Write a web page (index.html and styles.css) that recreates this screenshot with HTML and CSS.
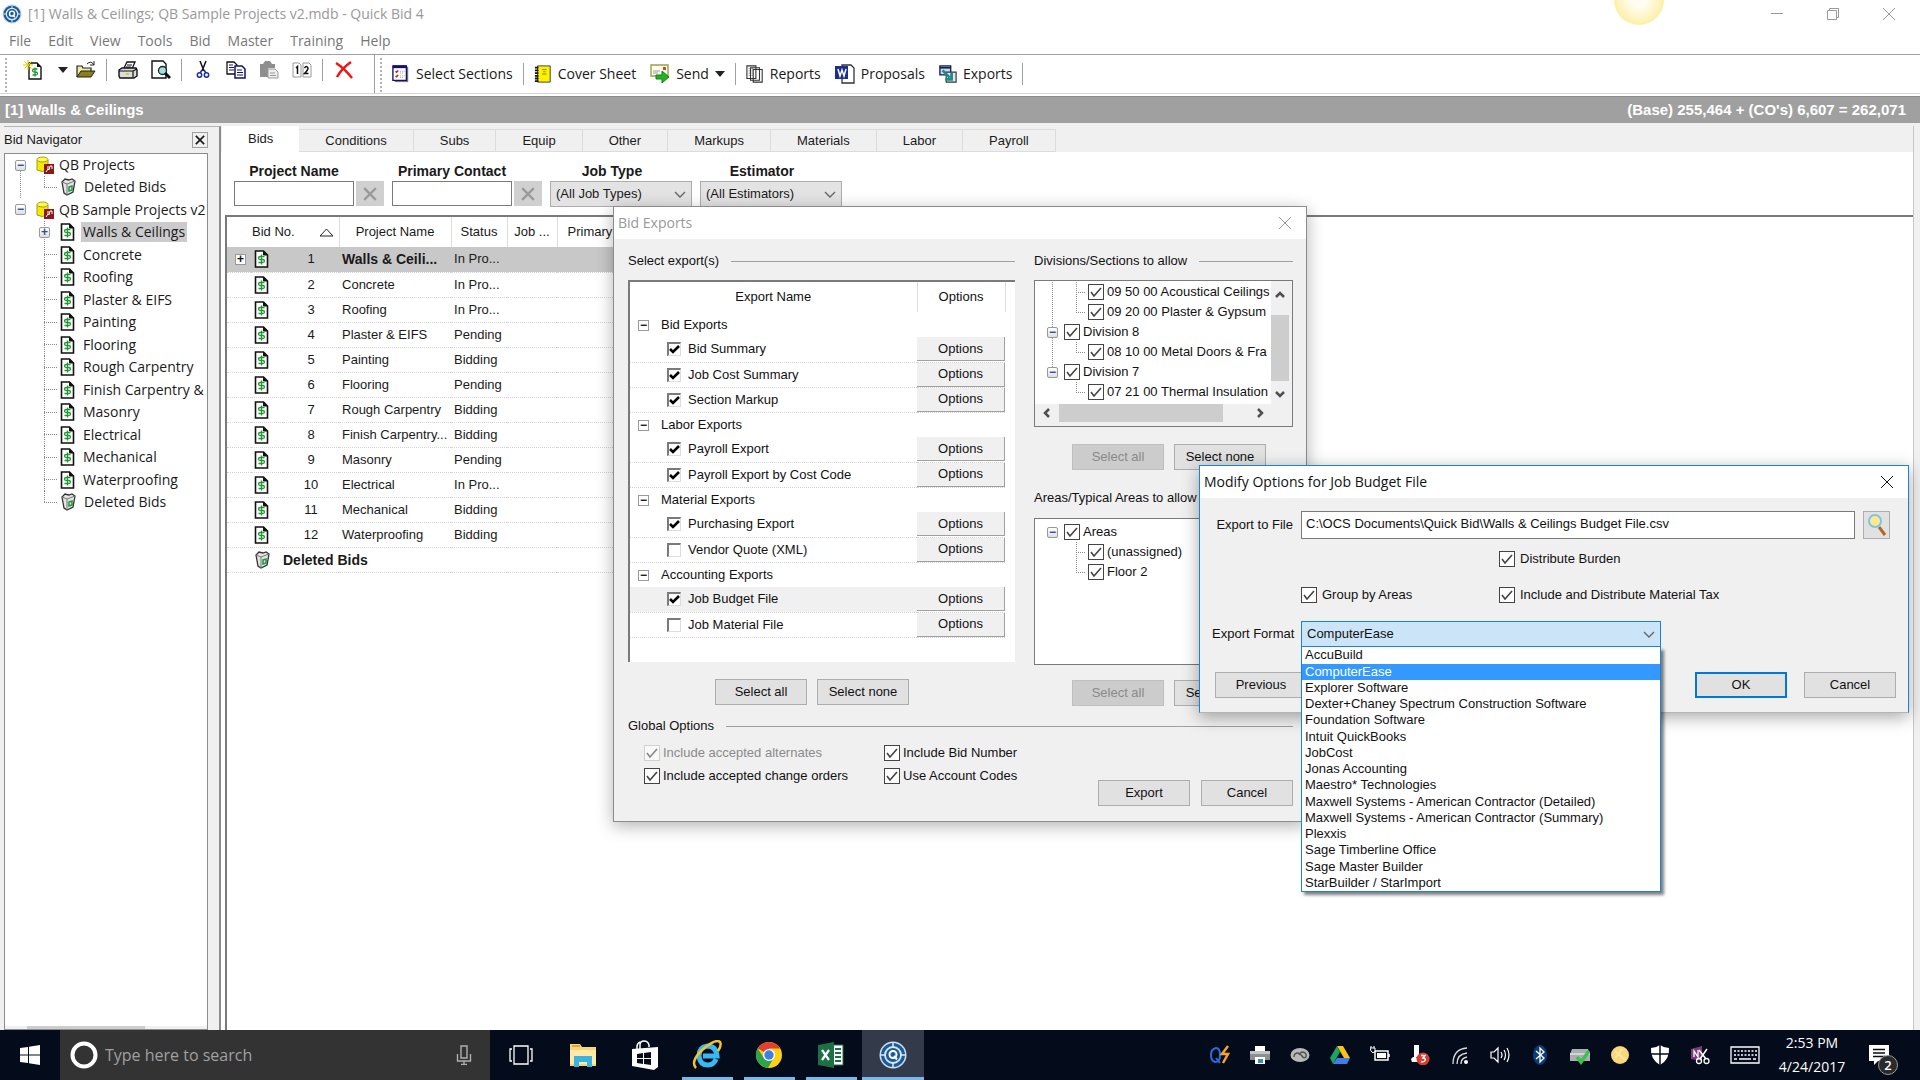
FILE: index.html
```html
<!DOCTYPE html>
<html lang="en">
<head>
    <meta charset="UTF-8">
    <meta name="viewport" content="width=device-width, initial-scale=1.0">
    <title>[1] Walls &amp; Ceilings; QB Sample Projects v2.mdb - Quick Bid 4</title>
    <link rel="stylesheet" href="styles.css">
</head>
<body>
    <svg class="sprite" aria-hidden="true">
        <symbol id="i-quickbid" viewBox="0 0 28 28">
            <circle cx="14" cy="14" r="13.500" fill="#cfe0f0"/>
            <circle cx="14" cy="14" r="12" fill="#1d5a9a"/>
            <circle cx="14" cy="14" r="8" fill="none" stroke="#dbe9f5" stroke-width="1.800"/>
            <path d="M14 2v5M14 21v5M2 14h5M21 14h5" stroke="#dbe9f5" stroke-width="1.500"/>
            <circle cx="14" cy="13.500" r="3.500" fill="none" stroke="#fff" stroke-width="2"/>
            <path d="M15 15l3 3.500" stroke="#fff" stroke-width="2"/>
        </symbol>
        <symbol id="i-bid" viewBox="0 0 14 18">
            <path d="M1 1h8l4 4v12H1z" fill="#fff" stroke="#111" stroke-width="1.600"/>
            <path d="M9 1v4h4" fill="#111" stroke="#111"/>
            <path d="M10 6.500H6q-2 0-2 1.500T6 9.500h2q2 0 2 1.500t-2 1.500H4M7 4.500v10" fill="none" stroke="#1d9a2f" stroke-width="1.300"/>
        </symbol>
        <symbol id="i-trash" viewBox="0 0 16 18">
            <path d="M2 4l3-3 4 1 3-1 3 2-2 11-6 3-3-2z" fill="#e4e4e4" stroke="#333" stroke-width="1.300"/>
            <path d="M2 4l5 2 8-3M7 6v11" fill="none" stroke="#777"/>
            <path d="M9 9l3-1v4l-3 1z" fill="none" stroke="#1a9a3a" stroke-width="1.500"/>
        </symbol>
        <symbol id="i-db" viewBox="0 0 18 18">
            <path d="M1 4v10q5 3 11 0V4z" fill="#f2ea00" stroke="#a79a20"/>
            <ellipse cx="6.500" cy="3.500" rx="5.500" ry="2.500" fill="#fff94d" stroke="#a79a20"/>
            <path d="M8 8h10v10H8z" fill="#8c1818"/>
            <path d="M10 16l2-3 1 1 1-4h2v3M12 10v3" fill="none" stroke="#fff"/>
        </symbol>
        <symbol id="i-new" viewBox="0 0 20 20">
            <path d="M6 3h8l4 4v12H6z" fill="#fff" stroke="#111" stroke-width="1.400"/>
            <path d="M14 3v4h4" fill="#111"/>
            <path d="M14.500 9h-3q-2 0-2 1.500t2 1.500h1q2 0 2 1.500t-2 1.500h-3M12 7.500v9" fill="none" stroke="#1d9a2f" stroke-width="1.300"/>
            <path d="M5 0v10M0 5h10M1.500 1.500l7 7M8.500 1.500l-7 7" stroke="#d8c800"/>
        </symbol>
        <symbol id="i-open" viewBox="0 0 20 20">
            <path d="M1 17V6h5l1 2h8v3" fill="#f4e9a0" stroke="#222" stroke-width="1.200"/>
            <path d="M1 17l4-6h14l-4 6z" fill="#8a7f1a" stroke="#222"/>
            <path d="M11 4q4-4 7 1M18 1v4h-4" fill="none" stroke="#222"/>
        </symbol>
        <symbol id="i-print" viewBox="0 0 20 20">
            <path d="M6 8l3-6h8l-3 7" fill="#fff" stroke="#111" stroke-width="1.300"/>
            <path d="M1 10l3-2h14l1 2v6l-3 2H2l-1-2z" fill="#ddd" stroke="#111" stroke-width="1.400"/>
            <path d="M1 11h14v6M15 11l4-2M9 5h5M8 7h5" fill="none" stroke="#111" stroke-width="1.200"/>
            <path d="M8 14h3" stroke="#d8c800" stroke-width="1.500"/>
        </symbol>
        <symbol id="i-preview" viewBox="0 0 20 20">
            <path d="M1 1h11l3 3v14H1z" fill="#fff" stroke="#111" stroke-width="1.400"/>
            <circle cx="11.500" cy="10.500" r="4" fill="#9fdfe6" stroke="#222" stroke-width="1.300"/>
            <path d="M14 13l5 5" stroke="#111" stroke-width="3"/>
        </symbol>
        <symbol id="i-cut" viewBox="0 0 20 20">
            <path d="M7 1l4 10M13 1L9 11" stroke="#111" stroke-width="1.500"/>
            <path d="M9 10l-2 3M11 10l2 3" stroke="#1c2f9e" stroke-width="1.500"/>
            <circle cx="6.500" cy="15" r="2.200" fill="none" stroke="#1c2f9e" stroke-width="1.500"/>
            <circle cx="13.500" cy="15" r="2.200" fill="none" stroke="#1c2f9e" stroke-width="1.500"/>
        </symbol>
        <symbol id="i-copy" viewBox="0 0 20 20">
            <path d="M1 2h7l3 3v9H1z" fill="#fff" stroke="#111" stroke-width="1.300"/>
            <path d="M9 6h7l3 3v9H9z" fill="#fff" stroke="#10107a" stroke-width="1.500"/>
            <path d="M3 5h4M3 7.500h5M3 10h5M11 10h5M11 12.500h6M11 15h6" stroke="#10107a"/>
        </symbol>
        <symbol id="i-paste" viewBox="0 0 20 20">
            <path d="M1 4h3l2-3h5l2 3h3v4H9v9H1z" fill="#8e8e8e"/>
            <path d="M9 9h7l3 3v6H9z" fill="#ededed" stroke="#9a9a9a"/>
            <path d="M11 13h5M11 15.500h6" stroke="#9a9a9a"/>
        </symbol>
        <symbol id="i-renumber" viewBox="0 0 20 20">
            <path d="M1 3h6l2 2v12H1zM11 3h6l2 2v12h-8z" fill="#fff" stroke="#999"/>
            <path d="M4 8l1.500-1.500V14M12.500 8q2-3 3.500 0 0 2-3.500 5.500h4" fill="none" stroke="#111" stroke-width="1.500"/>
        </symbol>
        <symbol id="i-delete" viewBox="0 0 20 20">
            <path d="M2 3q8 5 16 15M17 2Q8 8 3 17" fill="none" stroke="#f01414" stroke-width="2.500"/>
        </symbol>
        <symbol id="i-sections" viewBox="0 0 20 20">
            <path d="M3 2h15v17H3z" fill="#777"/>
            <path d="M1 1h15v16H1z" fill="#fff" stroke="#10107a" stroke-width="1.500"/>
            <path d="M1 2h15" stroke="#10107a" stroke-width="3"/>
            <path d="M4 7l1 1 2-2M4 12l1 1 2-2" fill="none" stroke="#e01010" stroke-width="1.500"/>
            <path d="M9 7h5M9 9h3M9 12h5M9 14h3" stroke="#999" stroke-dasharray="1 1"/>
        </symbol>
        <symbol id="i-cover" viewBox="0 0 20 20">
            <path d="M4 1h14v18H4z" fill="#fff200" stroke="#333"/>
            <path d="M9 5h5M10 7.500h3M9 10h5" stroke="#8a7a00"/>
            <path d="M3 2v17" stroke="#111" stroke-width="4" stroke-dasharray="2 1"/>
        </symbol>
        <symbol id="i-send" viewBox="0 0 20 20">
            <path d="M1 1h17v11H1z" fill="#fffef0" stroke="#9aa04a" stroke-width="1.400"/>
            <path d="M13 3h3v3h-3z" fill="#e84030"/>
            <path d="M3 7h7M3 9h5" stroke="#999"/>
            <path d="M6 11h6V7l7 6-7 6v-4H6z" fill="#22b522" stroke="#128012"/>
        </symbol>
        <symbol id="i-reports" viewBox="0 0 20 20">
            <path d="M8 5h10v14H8zM5 3h10v14H5zM1 1h10v14H1z" fill="#fff" stroke="#333" stroke-width="1.200"/>
            <path d="M3 4h6M3 6.500h6M3 9h6M3 11.500h6" stroke="#555" stroke-dasharray="1 1"/>
        </symbol>
        <symbol id="i-word" viewBox="0 0 20 20">
            <path d="M7 1h9l3 3v15H7z" fill="#fff" stroke="#333" stroke-width="1.300"/>
            <path d="M0 2h13v13H0z" fill="#1c2f8e"/>
            <path d="M3 5l2 7 2-6 2 6 2-7" fill="none" stroke="#fff" stroke-width="1.500"/>
        </symbol>
        <symbol id="i-exports" viewBox="0 0 20 20">
            <path d="M1 1h12v10H1z" fill="#cfd6e4" stroke="#10205a" stroke-width="1.500"/>
            <path d="M1 3h12" stroke="#10205a" stroke-width="2"/>
            <path d="M8 8h11v11H8z" fill="#dfe6ee" stroke="#333" stroke-width="1.300"/>
            <path d="M4 6l8 8M7 16h7V9" fill="none" stroke="#1c8c8c" stroke-width="3"/>
        </symbol>
        <symbol id="i-caret" viewBox="0 0 10 6"><path d="M0 0h10L5 6z" fill="#222"/></symbol>
        <symbol id="i-x" viewBox="0 0 12 12"><path d="M0 0l12 12M12 0L0 12" stroke="currentColor" fill="none"/></symbol>
        <symbol id="i-xbold" viewBox="0 0 12 12"><path d="M1 1l10 10M11 1L1 11" stroke="currentColor" stroke-width="2" fill="none"/></symbol>
        <symbol id="i-up" viewBox="0 0 10 8"><path d="M1 6l4-4 4 4" stroke="#505050" stroke-width="2.500" fill="none"/></symbol>
        <symbol id="i-down" viewBox="0 0 10 8"><path d="M1 2l4 4 4-4" stroke="#505050" stroke-width="2.500" fill="none"/></symbol>
        <symbol id="i-left" viewBox="0 0 8 10"><path d="M6 1L2 5l4 4" stroke="#505050" stroke-width="2.500" fill="none"/></symbol>
        <symbol id="i-right" viewBox="0 0 8 10"><path d="M2 1l4 4-4 4" stroke="#505050" stroke-width="2.500" fill="none"/></symbol>
        <symbol id="i-find" viewBox="0 0 20 24">
            <path d="M12 14l6 8" stroke="#b06a20" stroke-width="3"/>
            <circle cx="8" cy="8" r="6" fill="#ffe98a" stroke="#7fc4e8" stroke-width="2"/>
        </symbol>
    </svg>

    <main class="desktop">
        <header class="titlebar">
            <svg width="20" height="20"><use href="#i-quickbid"/></svg>
            <h1>[1] Walls &amp; Ceilings; QB Sample Projects v2.mdb - Quick Bid 4</h1>
            <div class="caption-buttons">
                <button aria-label="Minimize"><svg width="12" height="12"><path d="M0 5.500h12" stroke="currentColor"/></svg></button>
                <button aria-label="Restore"><svg width="12" height="12"><path d="M.5 2.500h9v9h-9zM2.500 2.500v-2h9v9h-2" stroke="currentColor" fill="none"/></svg></button>
                <button aria-label="Close"><svg width="12" height="12"><use href="#i-x"/></svg></button>
            </div>
        </header>
        <div class="pointer-spot"></div>

        <nav class="menubar">
            <a href="#">File</a><a href="#">Edit</a><a href="#">View</a><a href="#">Tools</a><a href="#">Bid</a><a href="#">Master</a><a href="#">Training</a><a href="#">Help</a>
        </nav>

        <div class="toolbars">
            <div class="toolbar tools">
                <span class="grip"></span>
                <button aria-label="New bid"><svg width="20" height="20"><use href="#i-new"/></svg></button>
                <button class="drop" aria-label="New bid options"><svg width="10" height="6"><use href="#i-caret"/></svg></button>
                <button aria-label="Open"><svg width="20" height="20"><use href="#i-open"/></svg></button>
                <span class="sep"></span>
                <button aria-label="Print"><svg width="20" height="20"><use href="#i-print"/></svg></button>
                <button aria-label="Print preview"><svg width="20" height="20"><use href="#i-preview"/></svg></button>
                <span class="sep"></span>
                <button aria-label="Cut"><svg width="20" height="20"><use href="#i-cut"/></svg></button>
                <button aria-label="Copy"><svg width="20" height="20"><use href="#i-copy"/></svg></button>
                <button aria-label="Paste" disabled><svg width="20" height="20"><use href="#i-paste"/></svg></button>
                <button aria-label="Renumber"><svg width="20" height="20"><use href="#i-renumber"/></svg></button>
                <span class="sep"></span>
                <button aria-label="Delete"><svg width="20" height="20"><use href="#i-delete"/></svg></button>
            </div>
            <div class="toolbar actions">
                <span class="grip"></span>
                <button><svg width="18" height="18"><use href="#i-sections"/></svg>Select Sections</button>
                <span class="sep"></span>
                <button><svg width="18" height="18"><use href="#i-cover"/></svg>Cover Sheet</button>
                <button><svg width="20" height="20"><use href="#i-send"/></svg>Send <svg width="10" height="6"><use href="#i-caret"/></svg></button>
                <span class="sep"></span>
                <button><svg width="18" height="18"><use href="#i-reports"/></svg>Reports</button>
                <button><svg width="20" height="20"><use href="#i-word"/></svg>Proposals</button>
                <button><svg width="18" height="18"><use href="#i-exports"/></svg>Exports</button>
                <span class="sep"></span>
            </div>
        </div>

        <div class="bidbar">
            <span>[1] Walls &amp; Ceilings</span>
            <span>(Base) 255,464 + (CO's) 6,607 = 262,071</span>
        </div>

        <div class="workspace">
            <aside class="navigator">
                <div class="navigator-head">
                    <h2>Bid Navigator</h2>
                    <button aria-label="Close navigator"><svg width="10" height="10"><use href="#i-xbold"/></svg></button>
                </div>
                <div class="navigator-box">
                    <ul class="tree nav-tree">
                        <li>
                            <div class="node"><span class="expander">−</span><svg width="18" height="18"><use href="#i-db"/></svg><span>QB Projects</span></div>
                            <ul>
                                <li><div class="node"><svg width="16" height="18"><use href="#i-trash"/></svg><span>Deleted Bids</span></div></li>
                            </ul>
                        </li>
                        <li>
                            <div class="node"><span class="expander">−</span><svg width="18" height="18"><use href="#i-db"/></svg><span>QB Sample Projects v2</span></div>
                            <ul>
                                <li class="selected"><div class="node"><span class="expander">+</span><svg width="15" height="18"><use href="#i-bid"/></svg><span>Walls &amp; Ceilings</span></div></li>
                                <li><div class="node"><svg width="15" height="18"><use href="#i-bid"/></svg><span>Concrete</span></div></li>
                                <li><div class="node"><svg width="15" height="18"><use href="#i-bid"/></svg><span>Roofing</span></div></li>
                                <li><div class="node"><svg width="15" height="18"><use href="#i-bid"/></svg><span>Plaster &amp; EIFS</span></div></li>
                                <li><div class="node"><svg width="15" height="18"><use href="#i-bid"/></svg><span>Painting</span></div></li>
                                <li><div class="node"><svg width="15" height="18"><use href="#i-bid"/></svg><span>Flooring</span></div></li>
                                <li><div class="node"><svg width="15" height="18"><use href="#i-bid"/></svg><span>Rough Carpentry</span></div></li>
                                <li><div class="node"><svg width="15" height="18"><use href="#i-bid"/></svg><span>Finish Carpentry &amp;</span></div></li>
                                <li><div class="node"><svg width="15" height="18"><use href="#i-bid"/></svg><span>Masonry</span></div></li>
                                <li><div class="node"><svg width="15" height="18"><use href="#i-bid"/></svg><span>Electrical</span></div></li>
                                <li><div class="node"><svg width="15" height="18"><use href="#i-bid"/></svg><span>Mechanical</span></div></li>
                                <li><div class="node"><svg width="15" height="18"><use href="#i-bid"/></svg><span>Waterproofing</span></div></li>
                                <li><div class="node"><svg width="16" height="18"><use href="#i-trash"/></svg><span>Deleted Bids</span></div></li>
                            </ul>
                        </li>
                    </ul>
                    <div class="nav-scroll"><div class="thumb"></div></div>
                </div>
            </aside>

            <section class="content">
                <div class="tabs" role="tablist">
                    <button role="tab" class="active" aria-selected="true">Bids</button>
                    <button role="tab">Conditions</button>
                    <button role="tab">Subs</button>
                    <button role="tab">Equip</button>
                    <button role="tab">Other</button>
                    <button role="tab">Markups</button>
                    <button role="tab">Materials</button>
                    <button role="tab">Labor</button>
                    <button role="tab">Payroll</button>
                </div>

                <div class="filters">
                    <div class="filter">
                        <label for="fProject">Project Name</label>
                        <input type="text" id="fProject">
                        <button aria-label="Clear project name" disabled><svg width="14" height="14"><use href="#i-xbold"/></svg></button>
                    </div>
                    <div class="filter">
                        <label for="fContact">Primary Contact</label>
                        <input type="text" id="fContact">
                        <button aria-label="Clear primary contact" disabled><svg width="14" height="14"><use href="#i-xbold"/></svg></button>
                    </div>
                    <div class="filter pick">
                        <label for="fType">Job Type</label>
                        <select id="fType"><option>(All Job Types)</option></select>
                    </div>
                    <div class="filter pick">
                        <label for="fEstimator">Estimator</label>
                        <select id="fEstimator"><option>(All Estimators)</option></select>
                    </div>
                </div>

                <div class="grid">
                    <table class="bids">
                        <colgroup><col class="c-exp"><col class="c-icon"><col class="c-no"><col class="c-name"><col class="c-status"><col class="c-job"><col></colgroup>
                        <thead>
                            <tr>
                                <th colspan="3"><span class="sorted">Bid No. <svg width="15" height="9"><path d="M1 8h13L7.500 1z" fill="none" stroke="#222"/></svg></span></th>
                                <th>Project Name</th><th>Status</th><th>Job ...</th><th class="last">Primary</th>
                            </tr>
                        </thead>
                        <tbody>
                            <tr class="current"><td><span class="expander plain">+</span></td><td><svg width="15" height="18"><use href="#i-bid"/></svg></td><td class="no">1</td><td>Walls &amp; Ceili...</td><td>In Pro...</td><td></td><td></td></tr>
                            <tr><td></td><td><svg width="15" height="18"><use href="#i-bid"/></svg></td><td class="no">2</td><td>Concrete</td><td>In Pro...</td><td></td><td></td></tr>
                            <tr><td></td><td><svg width="15" height="18"><use href="#i-bid"/></svg></td><td class="no">3</td><td>Roofing</td><td>In Pro...</td><td></td><td></td></tr>
                            <tr><td></td><td><svg width="15" height="18"><use href="#i-bid"/></svg></td><td class="no">4</td><td>Plaster &amp; EIFS</td><td>Pending</td><td></td><td></td></tr>
                            <tr><td></td><td><svg width="15" height="18"><use href="#i-bid"/></svg></td><td class="no">5</td><td>Painting</td><td>Bidding</td><td></td><td></td></tr>
                            <tr><td></td><td><svg width="15" height="18"><use href="#i-bid"/></svg></td><td class="no">6</td><td>Flooring</td><td>Pending</td><td></td><td></td></tr>
                            <tr><td></td><td><svg width="15" height="18"><use href="#i-bid"/></svg></td><td class="no">7</td><td>Rough Carpentry</td><td>Bidding</td><td></td><td></td></tr>
                            <tr><td></td><td><svg width="15" height="18"><use href="#i-bid"/></svg></td><td class="no">8</td><td>Finish Carpentry...</td><td>Bidding</td><td></td><td></td></tr>
                            <tr><td></td><td><svg width="15" height="18"><use href="#i-bid"/></svg></td><td class="no">9</td><td>Masonry</td><td>Pending</td><td></td><td></td></tr>
                            <tr><td></td><td><svg width="15" height="18"><use href="#i-bid"/></svg></td><td class="no">10</td><td>Electrical</td><td>In Pro...</td><td></td><td></td></tr>
                            <tr><td></td><td><svg width="15" height="18"><use href="#i-bid"/></svg></td><td class="no">11</td><td>Mechanical</td><td>Bidding</td><td></td><td></td></tr>
                            <tr><td></td><td><svg width="15" height="18"><use href="#i-bid"/></svg></td><td class="no">12</td><td>Waterproofing</td><td>Bidding</td><td></td><td></td></tr>
                            <tr class="deleted"><td></td><td><svg width="16" height="18"><use href="#i-trash"/></svg></td><td colspan="5">Deleted Bids</td></tr>
                        </tbody>
                    </table>
                </div>
            </section>
        </div>

        <section class="dialog exports" role="dialog" aria-labelledby="exportsTitle">
            <header class="dialog-title">
                <h2 id="exportsTitle">Bid Exports</h2>
                <button aria-label="Close"><svg width="12" height="12"><use href="#i-x"/></svg></button>
            </header>
            <div class="exports-body">
                <div class="exports-columns">
                    <div class="col-exports">
                        <h3>Select export(s)</h3>
                        <div class="list">
                            <table>
                                <colgroup><col><col class="c-options"><col class="c-end"></colgroup>
                                <thead><tr><th>Export Name</th><th>Options</th><th></th></tr></thead>
                                <tbody>
                                    <tr class="group"><td colspan="3"><span class="expander plain">−</span>Bid Exports</td></tr>
                                    <tr><td><label class="check sunken"><input type="checkbox" checked>Bid Summary</label></td><td><button>Options</button></td><td></td></tr>
                                    <tr><td><label class="check sunken"><input type="checkbox" checked>Job Cost Summary</label></td><td><button>Options</button></td><td></td></tr>
                                    <tr><td><label class="check sunken"><input type="checkbox" checked>Section Markup</label></td><td><button>Options</button></td><td></td></tr>
                                    <tr class="group"><td colspan="3"><span class="expander plain">−</span>Labor Exports</td></tr>
                                    <tr><td><label class="check sunken"><input type="checkbox" checked>Payroll Export</label></td><td><button>Options</button></td><td></td></tr>
                                    <tr><td><label class="check sunken"><input type="checkbox" checked>Payroll Export by Cost Code</label></td><td><button>Options</button></td><td></td></tr>
                                    <tr class="group"><td colspan="3"><span class="expander plain">−</span>Material Exports</td></tr>
                                    <tr><td><label class="check sunken"><input type="checkbox" checked>Purchasing Export</label></td><td><button>Options</button></td><td></td></tr>
                                    <tr><td><label class="check sunken"><input type="checkbox">Vendor Quote (XML)</label></td><td><button>Options</button></td><td></td></tr>
                                    <tr class="group"><td colspan="3"><span class="expander plain">−</span>Accounting Exports</td></tr>
                                    <tr class="hot"><td><label class="check sunken"><input type="checkbox" checked>Job Budget File</label></td><td><button>Options</button></td><td></td></tr>
                                    <tr><td><label class="check sunken"><input type="checkbox">Job Material File</label></td><td><button>Options</button></td><td></td></tr>
                                </tbody>
                            </table>
                        </div>
                        <div class="button-row">
                            <button class="btn">Select all</button>
                            <button class="btn">Select none</button>
                        </div>
                    </div>

                    <div class="col-scope">
                        <h3>Divisions/Sections to allow</h3>
                        <div class="scope-box">
                            <div class="scope-view">
                                <ul class="tree check-tree">
                                    <li>
                                        <ul>
                                            <li><div class="node"><label class="check"><input type="checkbox" checked>09 50 00 Acoustical Ceilings</label></div></li>
                                            <li><div class="node"><label class="check"><input type="checkbox" checked>09 20 00 Plaster &amp; Gypsum</label></div></li>
                                        </ul>
                                    </li>
                                    <li>
                                        <div class="node"><span class="expander">−</span><label class="check"><input type="checkbox" checked>Division 8</label></div>
                                        <ul>
                                            <li><div class="node"><label class="check"><input type="checkbox" checked>08 10 00 Metal Doors &amp; Fra</label></div></li>
                                        </ul>
                                    </li>
                                    <li>
                                        <div class="node"><span class="expander">−</span><label class="check"><input type="checkbox" checked>Division 7</label></div>
                                        <ul>
                                            <li><div class="node"><label class="check"><input type="checkbox" checked>07 21 00 Thermal Insulation</label></div></li>
                                        </ul>
                                    </li>
                                </ul>
                                <div class="vscroll">
                                    <svg width="10" height="8"><use href="#i-up"/></svg>
                                    <div class="track"><div class="thumb"></div></div>
                                    <svg width="10" height="8"><use href="#i-down"/></svg>
                                </div>
                            </div>
                            <div class="hscroll">
                                <svg width="8" height="10"><use href="#i-left"/></svg>
                                <div class="track"><div class="thumb"></div></div>
                                <svg width="8" height="10"><use href="#i-right"/></svg>
                            </div>
                        </div>
                        <div class="button-row">
                            <button class="btn" disabled>Select all</button>
                            <button class="btn">Select none</button>
                        </div>
                        <h3 class="next">Areas/Typical Areas to allow</h3>
                        <div class="scope-box areas">
                            <ul class="tree check-tree">
                                <li>
                                    <div class="node"><span class="expander">−</span><label class="check"><input type="checkbox" checked>Areas</label></div>
                                    <ul>
                                        <li><div class="node"><label class="check"><input type="checkbox" checked>(unassigned)</label></div></li>
                                        <li><div class="node"><label class="check"><input type="checkbox" checked>Floor 2</label></div></li>
                                    </ul>
                                </li>
                            </ul>
                        </div>
                        <div class="button-row">
                            <button class="btn" disabled>Select all</button>
                            <button class="btn">Select none</button>
                        </div>
                    </div>
                </div>

                <h3>Global Options</h3>
                <div class="global">
                    <div class="global-checks">
                        <label class="check"><input type="checkbox" checked disabled>Include accepted alternates</label>
                        <label class="check"><input type="checkbox" checked>Include Bid Number</label>
                        <label class="check"><input type="checkbox" checked>Include accepted change orders</label>
                        <label class="check"><input type="checkbox" checked>Use Account Codes</label>
                    </div>
                    <div class="global-buttons">
                        <button class="btn">Export</button>
                        <button class="btn">Cancel</button>
                    </div>
                </div>
            </div>
        </section>

        <section class="dialog modify" role="dialog" aria-labelledby="modifyTitle">
            <header class="dialog-title">
                <h2 id="modifyTitle">Modify Options for Job Budget File</h2>
                <button aria-label="Close"><svg width="12" height="12"><use href="#i-x"/></svg></button>
            </header>
            <div class="modify-body">
                <div class="field">
                    <label for="exportFile">Export to File</label>
                    <input type="text" id="exportFile" value="C:\OCS Documents\Quick Bid\Walls &amp; Ceilings Budget File.csv">
                    <button class="browse" aria-label="Browse"><svg width="20" height="24"><use href="#i-find"/></svg></button>
                </div>
                <div class="modify-checks">
                    <label class="check second"><input type="checkbox" checked>Distribute Burden</label>
                    <label class="check"><input type="checkbox" checked>Group by Areas</label>
                    <label class="check"><input type="checkbox" checked>Include and Distribute Material Tax</label>
                </div>
                <div class="field">
                    <label for="exportFormat">Export Format</label>
                    <div class="combo">
                        <select id="exportFormat"><option>ComputerEase</option></select>
                        <ul class="options" role="listbox" aria-label="Export Format">
                            <li role="option">AccuBuild</li>
                            <li role="option" class="picked" aria-selected="true">ComputerEase</li>
                            <li role="option">Explorer Software</li>
                            <li role="option">Dexter+Chaney Spectrum Construction Software</li>
                            <li role="option">Foundation Software</li>
                            <li role="option">Intuit QuickBooks</li>
                            <li role="option">JobCost</li>
                            <li role="option">Jonas Accounting</li>
                            <li role="option">Maestro* Technologies</li>
                            <li role="option">Maxwell Systems - American Contractor (Detailed)</li>
                            <li role="option">Maxwell Systems - American Contractor (Summary)</li>
                            <li role="option">Plexxis</li>
                            <li role="option">Sage Timberline Office</li>
                            <li role="option">Sage Master Builder</li>
                            <li role="option">StarBuilder / StarImport</li>
                        </ul>
                    </div>
                </div>
                <div class="modify-buttons">
                    <button class="btn previous">Previous</button>
                    <button class="btn default">OK</button>
                    <button class="btn">Cancel</button>
                </div>
            </div>
        </section>
    </main>

    <footer class="taskbar">
        <button class="start" aria-label="Start">
            <svg width="20" height="20" viewBox="0 0 20 20"><path d="M0 3l8-1v7.500H0zM9 1.800L20 0v9.500H9zM0 10.500h8V18l-8-1zM9 10.500h11V20L9 18.200z" fill="#fff"/></svg>
        </button>
        <div class="search">
            <svg width="28" height="28" viewBox="0 0 28 28"><circle cx="14" cy="14" r="11.500" fill="none" stroke="#fff" stroke-width="4"/></svg>
            <input type="text" aria-label="Search" placeholder="Type here to search">
            <svg width="16" height="20" viewBox="0 0 16 20"><path d="M5 1h6v12H5zM1.500 9v7h13V9M8 16v4M5 19.500h6" fill="none" stroke="#b0b0b0" stroke-width="1.400"/></svg>
        </div>
        <div class="apps">
            <button aria-label="Task View"><svg width="24" height="20" viewBox="0 0 24 20"><path d="M5 1h14v18H5zM3 4H1v12h2M21 4h2v12h-2" fill="none" stroke="#fff" stroke-width="1.300"/></svg></button>
            <button aria-label="File Explorer"><svg width="28" height="26" viewBox="0 0 28 26"><path d="M1 2h10l2 3h14v19H1z" fill="#f6d67a"/><path d="M3 4h8" stroke="#e8a33a" stroke-width="2"/><path d="M1 8h26v14H1z" fill="#ffe9a6"/><path d="M5 25V14h18v11h-5v-5h-8v5z" fill="#3bb3e0"/></svg></button>
            <button aria-label="Store"><svg width="26" height="30" viewBox="0 0 26 30"><path d="M8 9V5q0-4 4-4t5 4v2M5 9V6q1-4 4-4" fill="none" stroke="#fff" stroke-width="1.500"/><path d="M0 9l26-2v20l-4 3L0 26z" fill="#fff"/><path d="M5 14l6-1v5H5zM12 13l7-1v6h-7zM5 19h6v5l-6-1zM12 19h7v6l-7-1z" fill="#060c1a"/></svg></button>
            <button class="running multi" aria-label="Internet Explorer"><svg width="30" height="30" viewBox="0 0 30 30"><path d="M24 19q-2 6-8.500 6Q8 25 7 16q0-9 8.500-10Q24 6 25 16H11" fill="none" stroke="#39b8f2" stroke-width="5"/><path d="M4 28Q-2 22 10 10 24-2 28 2q2 3-2 9" fill="none" stroke="#f5c32c" stroke-width="2.500"/></svg></button>
            <button class="running multi" aria-label="Chrome"><svg width="28" height="28" viewBox="0 0 28 28"><circle cx="14" cy="14" r="13" fill="#fcd116"/><path d="M14 14L2.700 7.500A13 13 0 0 1 25.300 7.500H14z" fill="#e2402f"/><path d="M2.700 7.500A13 13 0 0 0 13 27l5-9-9-1z" fill="#2fa24c"/><circle cx="14" cy="14" r="6" fill="#fff"/><circle cx="14" cy="14" r="4.700" fill="#3f7ee8"/></svg></button>
            <button class="running" aria-label="Excel"><svg width="28" height="28" viewBox="0 0 28 28"><path d="M14 4h12v20H14z" fill="#fff" stroke="#1d7044"/><path d="M18 8h6M18 12h6M18 16h6M18 20h6" stroke="#1d7044" stroke-width="2"/><path d="M1 4l16-3v26L1 24z" fill="#1d7044"/><path d="M5 9l7 10M12 9L5 19" stroke="#fff" stroke-width="2.200"/></svg></button>
            <button class="running current" aria-label="Quick Bid"><svg width="28" height="28"><use href="#i-quickbid"/></svg></button>
        </div>
        <div class="tray">
            <svg viewBox="0 0 20 20"><path d="M6 3q-5 1-5 7t4 7q5 0 5-7T6 3zM6 13l4 5" fill="none" stroke="#2e6ad8" stroke-width="2"/><path d="M18 1l-6 8h6l-5 9" fill="none" stroke="#f5a32c" stroke-width="2.500"/></svg>
            <svg viewBox="0 0 20 20"><path d="M5 1h10v6H5z" fill="#fff"/><path d="M0 6h20v9H0z" fill="#8c8f92"/><path d="M0 6h20v3H0z" fill="#c2c5c7"/><path d="M5 12h10v7H5z" fill="#fff"/><path d="M8 14h5v4H8z" fill="#3c8ea8"/></svg>
            <svg viewBox="0 0 20 20"><ellipse cx="10" cy="10" rx="9.500" ry="7" fill="#b9b9b9"/><path d="M4 12q0-4 4-4 2 0 4 3t4 1q1-4-3-5-3 0-4 3" fill="none" stroke="#555" stroke-width="1.500"/></svg>
            <svg viewBox="0 0 20 20"><path d="M7 1h6l7 12h-6z" fill="#fbc31a"/><path d="M7 1l3 6-7 12-3-6z" fill="#1da362"/><path d="M3 19l4-6h13l-3 6z" fill="#3f7ee8"/></svg>
            <svg viewBox="0 0 20 20"><path d="M5 6h13v9H5zM19 9v3" fill="none" stroke="#fff" stroke-width="1.500"/><path d="M7 8h9v5H7z" fill="#fff"/><path d="M0 3h5v3l-2 2-2-2zM1 1v2M4 1v2" fill="#060c1a" stroke="#fff"/></svg>
            <svg viewBox="0 0 20 20"><path d="M4 0h5v12H4zM1 14q3-4 6-1l2 4H2z" fill="#fff"/><circle cx="13" cy="14" r="6.500" fill="#d93b30"/><path d="M11 10.500h4l-2 2.500q3 0 2 2.500-1 2-4 1" fill="none" stroke="#fff" stroke-width="1.500"/></svg>
            <svg viewBox="0 0 20 20"><path d="M3 19Q3 4 17 3M7 19Q7 9 17 8M11 19q0-6 6-7" fill="none" stroke="#ddd" stroke-width="1.300"/><circle cx="16" cy="17" r="2" fill="#fff"/></svg>
            <svg viewBox="0 0 20 20"><path d="M1 7h3l4-4v14l-4-4H1zM11 7q2 3 0 6M14 5q3 5 0 10M17 3q4 7 0 14" fill="none" stroke="#fff" stroke-width="1.200"/></svg>
            <svg viewBox="0 0 20 20"><ellipse cx="10" cy="10" rx="7" ry="10" fill="#0c3c78"/><path d="M6 6l8 7-4 4V3l4 4-8 7" fill="none" stroke="#fff" stroke-width="1.300"/></svg>
            <svg viewBox="0 0 20 20"><path d="M2 4h16l2 5v7H0V9z" fill="#a9aeb0"/><path d="M0 9h20" stroke="#dfe2e3" stroke-width="1.500"/><path d="M7 12l4 5 8-11" fill="none" stroke="#3cc24a" stroke-width="3.500"/></svg>
            <svg viewBox="0 0 20 20"><circle cx="10" cy="10" r="9" fill="#f7d979"/><path d="M5 6l10 9M12 4q-4 6-7 9" stroke="#fbe6a4" stroke-width="2" fill="none"/></svg>
            <svg viewBox="0 0 20 20"><path d="M10 0q4 3 9 3 1 11-9 17Q0 14 1 3q5 0 9-3z" fill="#fff"/><path d="M10 0v20M1 9h18" stroke="#060c1a" stroke-width="1.500"/></svg>
            <svg viewBox="0 0 20 20"><path d="M1 4l11-3v15L1 14z" fill="#80397b"/><path d="M4 12V6l4 6V5" fill="none" stroke="#fff" stroke-width="1.300"/><path d="M17 4l-7 10M9 5l7 9" stroke="#fff" stroke-width="1.500"/><circle cx="9" cy="16" r="2.500" fill="none" stroke="#fff" stroke-width="1.300"/><circle cx="16.500" cy="16" r="2.500" fill="none" stroke="#fff" stroke-width="1.300"/></svg>
            <svg class="keyboard" viewBox="0 0 30 18"><path d="M1 1h28v16H1z" fill="none" stroke="#fff" stroke-width="1.300"/><path d="M4 5h23M4 9h23" stroke="#fff" stroke-width="1.500" stroke-dasharray="2 1.500"/><path d="M4 13h3M9 13h12M23 13h3" stroke="#fff" stroke-width="1.500"/></svg>
        </div>
        <div class="clock"><span>2:53 PM</span><span>4/24/2017</span></div>
        <button class="notify" aria-label="Notifications">
            <svg width="22" height="22" viewBox="0 0 22 22"><path d="M0 1h20v16H9l-4 4v-4H0z" fill="#fff"/><path d="M4 5.500h12M4 9h12M4 12.500h12" stroke="#060c1a" stroke-width="1.300"/></svg>
            <span class="badge">2</span>
        </button>
    </footer>
</body>
</html>
```

FILE: styles.css
```css
* {
    margin: 0;
    padding: 0;
    box-sizing: border-box;
}

:root {
    --ui: "Open Sans", "Noto Sans", sans-serif;
    --face: #f0f0f0;
    --line: #a0a0a0;
    --dots: repeating-linear-gradient(to bottom, #8a8a8a 0 1px, transparent 1px 2px);
    --dots-x: repeating-linear-gradient(to right, #8a8a8a 0 1px, transparent 1px 2px);
}

body {
    height: 100vh;
    display: flex;
    flex-direction: column;
    overflow: hidden;
    background: #fff;
    color: #1a1a1a;
    font: 13px/16px "Liberation Sans", Arial, sans-serif;
}

button, input, select {
    font: inherit;
    color: inherit;
    border: 0;
    border-radius: 0;
    background: none;
}

ul {
    list-style: none;
}

a {
    color: inherit;
    text-decoration: none;
}

svg {
    display: block;
    flex: none;
}

table {
    border-collapse: collapse;
    table-layout: fixed;
}

h1, h2, h3 {
    font-size: inherit;
    font-weight: 400;
}

.sprite {
    position: absolute;
    width: 0;
    height: 0;
}

/* main window */
.desktop {
    flex: 1;
    min-height: 0;
    display: flex;
    flex-direction: column;
    position: relative;
    overflow: hidden;
}

.titlebar {
    display: flex;
    align-items: center;
    height: 28px;
    padding-left: 2px;
    gap: 6px;
    color: #999;
    font: 14px/20px var(--ui);
}

.titlebar h1 {
    flex: 1;
}

.caption-buttons {
    display: flex;
    padding-right: 3px;
}

.caption-buttons button {
    width: 56px;
    height: 28px;
    display: grid;
    place-items: center;
}

.pointer-spot {
    position: absolute;
    top: -25px;
    left: 1614px;
    width: 50px;
    height: 50px;
    border-radius: 50%;
    background: radial-gradient(circle, #fffdf2 20%, #fdf3b8 60%, #f7df7c);
}

.menubar {
    display: flex;
    gap: 17px;
    height: 26px;
    padding: 3px 9px;
    color: #777;
    font: 14px/20px var(--ui);
}

.toolbars {
    display: flex;
    height: 40px;
    border-top: 1px solid var(--line);
    border-bottom: 1px solid #d4d4d4;
}

.toolbar {
    display: flex;
    align-items: center;
}

.toolbar button {
    display: flex;
    align-items: center;
    justify-content: center;
}

.toolbar .grip {
    align-self: stretch;
    width: 2px;
    margin: 3px 9px 0 5px;
    background: repeating-linear-gradient(to bottom, #b4b4b4 0 2px, transparent 2px 4px);
}

.toolbar .sep {
    width: 1px;
    height: 22px;
    background: var(--line);
}

.tools {
    width: 375px;
    padding-bottom: 9px;
    border-right: 1px solid var(--line);
}

.tools .grip {
    margin-bottom: -9px;
}

.tools button {
    width: 33px;
}

.tools button.drop {
    width: 20px;
    padding-left: 8px;
}

.tools .sep {
    margin: 0 4px;
}

.actions {
    font: 14px/20px var(--ui);
}

.actions button {
    gap: 6px;
    padding: 0 7px;
}

.actions .sep {
    margin: 0 3px;
}

.actions .grip {
    margin-right: 3px;
}

.bidbar {
    display: flex;
    justify-content: space-between;
    align-items: center;
    height: 27px;
    margin-top: 2px;
    padding: 0 14px 0 5px;
    border-top: 1px solid #8c8c8c;
    background: var(--line);
    color: #fff;
    font-size: 15px;
    font-weight: 700;
}

.workspace {
    flex: 1;
    min-height: 0;
    display: flex;
    padding: 3px 6px 0 4px;
    background: var(--face);
}

/* navigator */
.navigator {
    width: 217px;
    display: flex;
    flex-direction: column;
    padding-right: 11px;
    border-top: 1px solid #b4b4b4;
    border-right: 2px solid #8c8c8c;
}

.navigator-head {
    display: flex;
    align-items: center;
    justify-content: space-between;
    height: 26px;
}

.navigator-head button {
    width: 16px;
    height: 16px;
    display: grid;
    place-items: center;
    border: 1px solid var(--line);
}

.navigator-box {
    flex: 1;
    min-height: 0;
    display: flex;
    flex-direction: column;
    justify-content: space-between;
    border: 1px solid #8c8c8c;
    background: #fff;
    overflow: hidden;
}

.nav-scroll {
    height: 3px;
    padding: 0 62px 0 22px;
    background: var(--face);
}

.nav-scroll .thumb {
    height: 3px;
    background: #cdcdcd;
}

.expander {
    flex: none;
    width: 11px;
    height: 11px;
    display: grid;
    place-items: center;
    border: 1px solid #999;
    border-radius: 2px;
    background: linear-gradient(#fff, #dedede);
    color: #2a4fa0;
    font: 700 12px/9px "Liberation Sans", sans-serif;
}

.expander.plain {
    border-radius: 0;
    background: #fff;
    color: #111;
}

.node {
    display: flex;
    align-items: center;
    white-space: nowrap;
}

.node::before {
    content: "";
    flex: none;
    height: 1px;
    background: var(--dots-x);
}

/* vertical guides sit behind the rows, one per level */
.tree li {
    background: var(--dots) no-repeat;
}

.tree > li > .node::before,
.selected > .node::before {
    display: none;
}

.nav-tree {
    font: 14px/20px var(--ui);
}

.nav-tree .node {
    height: 22px;
}

.nav-tree li:nth-child(even) > .node {
    height: 23px;
}

.nav-tree > li {
    background-position: 15px 11px;
    background-size: 1px 100%;
}

.nav-tree > li:last-child {
    background-size: 0 0;
}

.nav-tree > li > .node {
    padding-left: 10px;
    gap: 5px;
}

.nav-tree > li > .node .expander {
    margin-right: 5px;
}

.nav-tree ul > li {
    padding-left: 39px;
    background-position: 39px 0;
    background-size: 1px 100%;
}

.nav-tree ul > li:last-child {
    background-size: 1px 11px;
}

.nav-tree ul .node::before {
    width: 14px;
    margin-right: 2px;
}

.nav-tree ul .node svg {
    margin-right: 6px;
}

.nav-tree ul .node > span:last-child {
    padding: 0 2px;
}

.nav-tree .selected .expander {
    margin: 0 10px 0 -5px;
}

.nav-tree .selected .node > span:last-child {
    background: #cbcbcb;
}

/* content */
.content {
    flex: 1;
    min-width: 0;
    display: flex;
    flex-direction: column;
    background: #fff;
    border-right: 1px solid #c8c8c8;
}

.tabs {
    display: flex;
    align-items: flex-end;
    height: 26px;
    padding-left: 1px;
    background: var(--face);
}

.tabs button {
    height: 23px;
    padding: 0 26px;
    border: 1px solid #dcdcdc;
    border-left: 0;
}

.tabs .active {
    height: 26px;
    background: #fff;
    border: 0;
}

.filters {
    display: flex;
    gap: 8px;
    padding: 11px 13px 8px;
}

.filter {
    display: grid;
    grid-template-columns: 120px 28px;
    gap: 1px 2px;
    align-content: start;
}

.filter.pick {
    grid-template-columns: 142px;
}

.filter label {
    grid-column: 1 / -1;
    height: 17px;
    padding-right: 30px;
    text-align: center;
    font-size: 14px;
    font-weight: 700;
}

.filter.pick label {
    padding-right: 18px;
}

.filter input {
    min-width: 0;
    height: 25px;
    border: 1px solid #7a7a7a;
}

.filter button {
    height: 25px;
    display: grid;
    place-items: center;
    background: #d0d0d0;
    color: #9a9a9a;
}

select {
    appearance: none;
    height: 26px;
    padding: 0 5px;
    border: 1px solid #adadad;
    background: #e3e3e3 url("data:image/svg+xml,%3Csvg xmlns='http://www.w3.org/2000/svg' width='12' height='7'%3E%3Cpath d='M1 1l5 5 5-5' fill='none' stroke='%23666' stroke-width='1.4'/%3E%3C/svg%3E") no-repeat right 5px center;
}

.grid {
    flex: 1;
    margin-left: 4px;
    border-top: 2px solid #7a7a7a;
    border-left: 2px solid #7a7a7a;
}

.bids {
    width: 700px;
}

.bids .c-exp { width: 24px; }
.bids .c-icon { width: 32px; }
.bids .c-no { width: 56px; }
.bids .c-name { width: 112px; }
.bids .c-status { width: 56px; }
.bids .c-job { width: 50px; }

.bids th {
    height: 30px;
    border-right: 1px solid #dcdcdc;
    font-weight: 400;
}

.bids .last {
    padding-left: 10px;
    border: 0;
    text-align: left;
}

.sorted {
    display: flex;
    align-items: center;
    justify-content: space-between;
    padding: 0 5px 0 25px;
}

.bids td {
    height: 25px;
    padding-left: 3px;
    border-bottom: 1px dotted #d4d4d4;
    white-space: nowrap;
}

.bids .expander {
    margin-left: 5px;
}

.bids .no {
    padding: 0;
    text-align: center;
}

.bids .current td {
    background: #c8c8c8;
}

.bids .current td:nth-child(4),
.bids .deleted td {
    font-size: 14px;
    font-weight: 700;
}

.bids .deleted td:last-child {
    padding-left: 0;
}

/* dialogs */
.dialog {
    position: absolute;
    background: var(--face);
    color: #111;
}

.dialog-title {
    display: flex;
    align-items: center;
    justify-content: space-between;
    height: 32px;
    padding: 0 15px 0 4px;
    background: #fff;
    font: 14px/20px var(--ui);
}

.dialog-title button {
    display: grid;
    place-items: center;
}

.exports {
    top: 206px;
    left: 613px;
    width: 694px;
    border: 1px solid #8c8c8c;
    box-shadow: 0 4px 16px rgba(0, 0, 0, 0.3);
}

.exports .dialog-title {
    color: #999;
}

.exports-body {
    padding: 14px 13px 15px 14px;
}

.exports h3 {
    display: flex;
    align-items: center;
    gap: 12px;
    height: 16px;
    white-space: nowrap;
}

.exports h3::after {
    content: "";
    flex: 1;
    height: 1px;
    background: var(--line);
}

.exports-columns {
    display: grid;
    grid-template-columns: 387px 259px;
    justify-content: space-between;
    margin-bottom: 12px;
}

.list {
    height: 382px;
    margin: 11px 0 17px;
    border-top: 2px solid #7a7a7a;
    border-left: 2px solid #7a7a7a;
    background: #fff;
}

.list table {
    width: 100%;
}

.list .c-options { width: 88px; }
.list .c-end { width: 10px; }

.list th {
    height: 30px;
    border-right: 1px solid #dcdcdc;
    font-weight: 400;
}

.list th:last-child {
    border: 0;
}

.list td {
    height: 25px;
    border-bottom: 1px dotted #d4d4d4;
}

.list td:last-child {
    border: 0;
}

.list .group .expander {
    display: inline-grid;
    margin: 0 12px 0 8px;
    vertical-align: middle;
}

.list .check {
    margin-left: 37px;
}

.list .hot td:first-child {
    background: var(--face);
}

.list button {
    display: block;
    width: 100%;
    height: 24px;
    background: var(--face);
    border-right: 1px solid var(--line);
    border-bottom: 1px solid var(--line);
}

.button-row {
    display: flex;
    gap: 10px;
    padding-left: 38px;
}

.col-exports .button-row {
    padding-left: 87px;
}

.btn {
    width: 92px;
    height: 26px;
    border: 1px solid #adadad;
    background: #e1e1e1;
}

.btn:disabled {
    border-color: #bfbfbf;
    background: #ccc;
    color: #8a8a8a;
}

.check {
    display: flex;
    align-items: center;
    gap: 3px;
    white-space: nowrap;
}

.check input {
    appearance: none;
    flex: none;
    width: 16px;
    height: 16px;
    border: 1px solid #444;
    background: #fff;
}

.check input:checked {
    background: #fff url("data:image/svg+xml,%3Csvg xmlns='http://www.w3.org/2000/svg' width='14' height='14'%3E%3Cpath d='M2 7l3 4 7-8' fill='none' stroke='%23444' stroke-width='1.6'/%3E%3C/svg%3E") center no-repeat;
}

.check input:disabled {
    border-color: #bbb;
    opacity: 0.6;
}

.check:has(input:disabled) {
    color: #8a8a8a;
}

.check.sunken {
    gap: 7px;
}

.check.sunken input {
    width: 14px;
    height: 14px;
    border: 1px solid #dcdcdc;
    border-top: 2px solid #7a7a7a;
    border-left: 2px solid #7a7a7a;
}

.check.sunken input:checked {
    background-image: url("data:image/svg+xml,%3Csvg xmlns='http://www.w3.org/2000/svg' width='11' height='11'%3E%3Cpath d='M1 5l3 3 6-6' fill='none' stroke='%23000' stroke-width='2.6'/%3E%3C/svg%3E");
}

.scope-box {
    height: 147px;
    margin: 11px 0 17px;
    border: 1px solid #7a7a7a;
    background: #fff;
    overflow: hidden;
}

.exports .next {
    margin-top: 20px;
}

.scope-box.areas {
    margin: 12px 0 15px;
    padding-top: 2px;
}

.scope-view {
    display: flex;
    height: 123px;
}

.check-tree {
    flex: 1;
    min-width: 0;
    padding-top: 1px;
    overflow: hidden;
}

.check-tree .node {
    height: 20px;
}

.check-tree > li {
    background-position: 17px 0;
    background-size: 1px 100%;
}

.check-tree > li:last-child {
    background-size: 1px 10px;
}

.check-tree > li:only-child {
    background-size: 0 0;
}

.check-tree > li > .node {
    padding-left: 12px;
    gap: 6px;
}

.check-tree ul > li {
    padding-left: 41px;
    background-position: 41px 0;
    background-size: 1px 100%;
}

.check-tree ul > li:last-child {
    background-size: 1px 10px;
}

.check-tree ul .node::before {
    width: 10px;
    margin-right: 2px;
}

.vscroll {
    width: 21px;
    display: flex;
    flex-direction: column;
    align-items: center;
    gap: 6px;
    padding: 10px 3px 6px 0;
    background: var(--face);
}

.vscroll .track {
    flex: 1;
    align-self: stretch;
    padding: 10px 0 2px;
}

.vscroll .thumb {
    height: 66px;
    background: #cdcdcd;
}

.hscroll {
    height: 22px;
    display: flex;
    align-items: center;
    gap: 8px;
    padding: 0 28px 4px 8px;
    background: var(--face);
}

.hscroll .track {
    flex: 1;
    height: 18px;
}

.hscroll .thumb {
    width: 164px;
    height: 18px;
    background: #cdcdcd;
}

.global {
    display: flex;
    justify-content: space-between;
    align-items: flex-end;
    padding-top: 11px;
}

.global-checks {
    display: grid;
    grid-template-columns: 240px auto;
    gap: 7px 0;
    padding: 0 0 22px 16px;
}

.global-buttons {
    display: flex;
    gap: 11px;
}

.modify {
    top: 465px;
    left: 1199px;
    width: 710px;
    border: 1px solid #1883d7;
    border-bottom-color: #b4b4b4;
    box-shadow: 0 4px 16px rgba(0, 0, 0, 0.35);
}

.modify-body {
    padding: 13px 12px 14px;
}

.field {
    display: flex;
    align-items: center;
}

.field > label {
    flex: none;
    width: 81px;
    margin-right: 8px;
    text-align: right;
    white-space: nowrap;
}

.field input {
    flex: 1;
    height: 28px;
    padding: 0 4px 3px;
    border: 1px solid #7a7a7a;
    background: #fff;
}

.browse {
    width: 27px;
    height: 28px;
    margin: 0 6px 0 8px;
    display: grid;
    place-items: center;
    border: 1px solid #adadad;
    background: #e1e1e1;
}

.modify-checks {
    display: grid;
    grid-template-columns: 198px auto;
    gap: 20px 0;
    padding: 12px 0 18px 89px;
}

.modify-checks .check {
    gap: 5px;
}

.modify-checks .second {
    grid-column: 2;
}

.combo {
    position: relative;
    width: 360px;
}

.combo select {
    display: block;
    width: 100%;
    border-color: #1883d7;
    background-color: #cce4f7;
}

.options {
    position: absolute;
    z-index: 2;
    top: 26px;
    left: 0;
    width: 100%;
    border: 1px solid #1883d7;
    border-top: 0;
    background: #fff;
    box-shadow: 3px 3px 3px rgba(0, 0, 0, 0.5);
}

.options li {
    height: 16px;
    padding-left: 3px;
    white-space: nowrap;
}

.options li:nth-child(4n + 1) {
    height: 17px;
}

.options .picked {
    background: #3399ff;
    color: #fff;
}

.modify-buttons {
    display: flex;
    justify-content: flex-end;
    gap: 17px;
    margin-top: 25px;
}

.modify-buttons .previous {
    margin: 0 auto 0 3px;
}

.btn.default {
    border: 2px solid #0078d7;
}

/* taskbar */
.taskbar {
    display: flex;
    height: 50px;
    background: #040b1a;
    color: #fff;
    font: 14px/24px var(--ui);
}

.taskbar button {
    display: grid;
    place-items: center;
}

.start {
    width: 60px;
}

.search {
    width: 430px;
    display: flex;
    align-items: center;
    gap: 7px;
    padding: 0 18px 0 10px;
    background: #333;
}

.search input {
    flex: 1;
    min-width: 0;
    font-size: 16px;
}

.search input::placeholder {
    color: #a0a0a0;
    opacity: 1;
}

.apps {
    flex: 1;
    display: flex;
}

.apps button {
    width: 62px;
    border-bottom: 3px solid transparent;
    border-top: 3px solid transparent;
}

.apps .running {
    background: linear-gradient(#76b9ed, #76b9ed) no-repeat center bottom / 51px 3px border-box;
}

.apps .current {
    background: linear-gradient(#76b9ed, #76b9ed) no-repeat center bottom / 100% 3px border-box, #333b4a;
}

.tray {
    display: flex;
    align-items: center;
    gap: 20px;
}

.tray svg {
    width: 20px;
    height: 20px;
}

.tray .keyboard {
    width: 30px;
    height: 18px;
}

.clock {
    width: 104px;
    display: flex;
    flex-direction: column;
    align-items: center;
    justify-content: center;
}

.notify {
    position: relative;
    width: 56px;
    padding-right: 24px;
}

.badge {
    position: absolute;
    top: 25px;
    left: 14px;
    width: 20px;
    height: 20px;
    border: 1px solid #999;
    border-radius: 50%;
    background: #2a2a2a;
    font-size: 13px;
    font-weight: 600;
    line-height: 18px;
}
```
